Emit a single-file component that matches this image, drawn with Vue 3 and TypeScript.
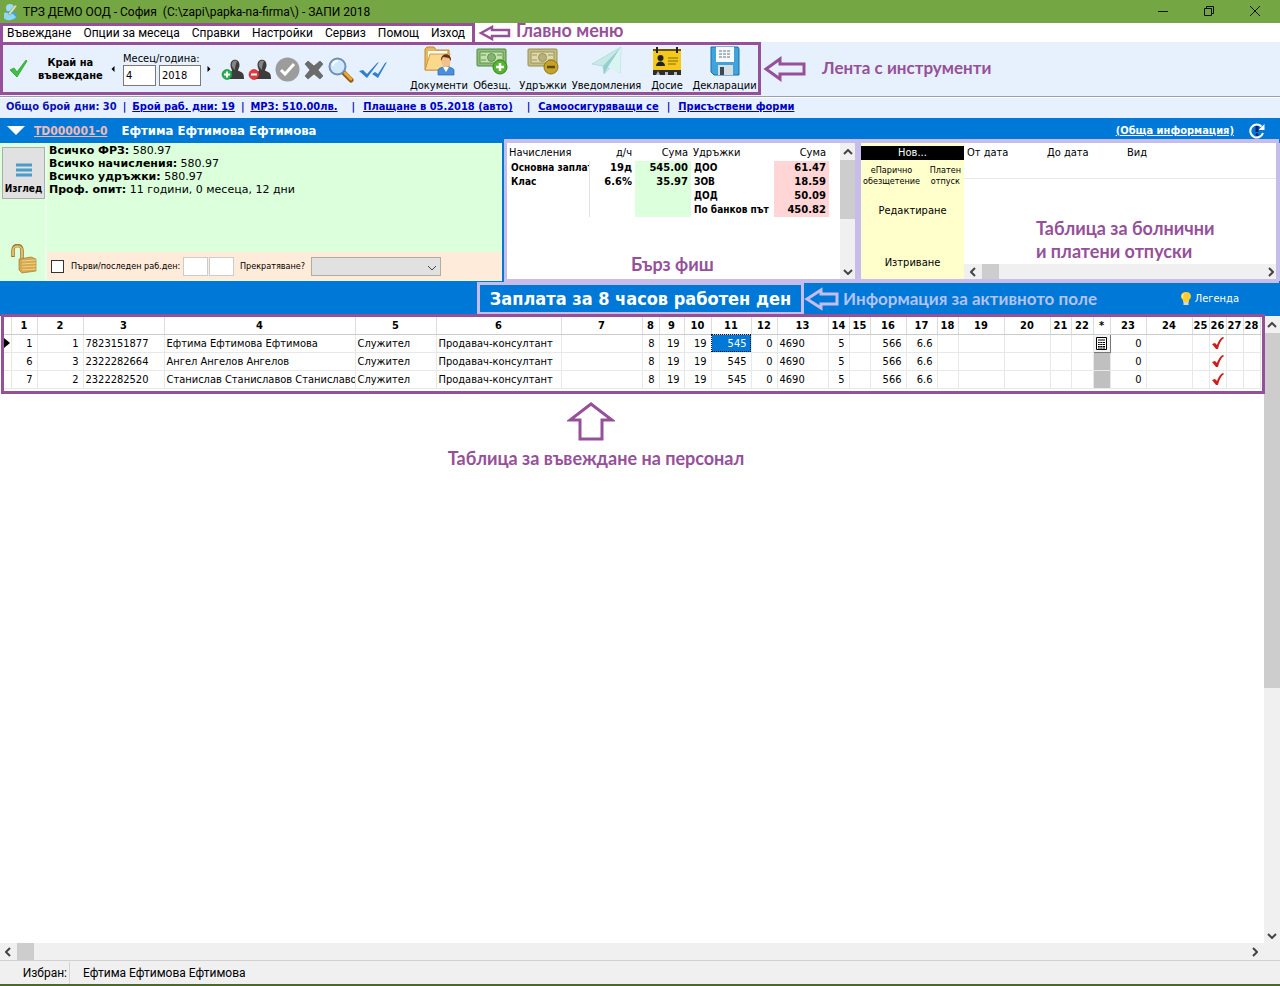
<script setup lang="ts">
import { ref } from 'vue'

interface Column {
  id: string
  width: number
  align: 'left' | 'right' | 'center'
}

const menu: string[] = ['Въвеждане', 'Опции за месеца', 'Справки', 'Настройки', 'Сервиз', 'Помощ', 'Изход']

const columns: Column[] = [
  { id: '1', width: 26, align: 'right' },
  { id: '2', width: 46, align: 'right' },
  { id: '3', width: 81, align: 'left' },
  { id: '4', width: 191, align: 'left' },
  { id: '5', width: 81, align: 'left' },
  { id: '6', width: 125, align: 'left' },
  { id: '7', width: 81, align: 'left' },
  { id: '8', width: 17, align: 'right' },
  { id: '9', width: 25, align: 'right' },
  { id: '10', width: 27, align: 'right' },
  { id: '11', width: 40, align: 'right' },
  { id: '12', width: 26, align: 'right' },
  { id: '13', width: 51, align: 'left' },
  { id: '14', width: 21, align: 'right' },
  { id: '15', width: 21, align: 'right' },
  { id: '16', width: 36, align: 'right' },
  { id: '17', width: 31, align: 'right' },
  { id: '18', width: 21, align: 'right' },
  { id: '19', width: 46, align: 'right' },
  { id: '20', width: 46, align: 'right' },
  { id: '21', width: 21, align: 'right' },
  { id: '22', width: 22, align: 'right' },
  { id: '*', width: 17, align: 'center' },
  { id: '23', width: 36, align: 'right' },
  { id: '24', width: 46, align: 'right' },
  { id: '25', width: 17, align: 'right' },
  { id: '26', width: 17, align: 'center' },
  { id: '27', width: 17, align: 'right' },
  { id: '28', width: 17, align: 'right' },
]

const shared: Record<string, string> = {
  '5': 'Служител', '6': 'Продавач-консултант', '8': '8', '9': '19', '10': '19', '11': '545',
  '12': '0', '13': '4690', '14': '5', '16': '566', '17': '6.6', '23': '0',
}

const people: Record<string, string>[] = [
  { ...shared, '1': '1', '2': '1', '3': '7823151877', '4': 'Ефтима Ефтимова Ефтимова' },
  { ...shared, '1': '6', '2': '3', '3': '2322282664', '4': 'Ангел Ангелов Ангелов' },
  { ...shared, '1': '7', '2': '2', '3': '2322282520', '4': 'Станислав Станиславов Станиславов' },
]

const slip: string[][] = [
  ['Основна заплата', '19д', '545.00', 'ДОО', '61.47'],
  ['Клас', '6.6%', '35.97', 'ЗОВ', '18.59'],
  ['', '', '', 'ДОД', '50.09'],
  ['', '', '', 'По банков път', '450.82'],
]

const month = ref('4')
const year = ref('2018')
const firstDay = ref('')
const lastDay = ref('')
const partial = ref(false)
</script>

<template>
  <div class="app">
    <header class="titlebar">
      <svg class="logo" width="16" height="18" viewBox="0 0 16 18">
        <circle cx="7" cy="5" r="4" fill="#9bdcf5" />
        <path d="M1 15c0-5 3-7 6-7s7 2 7 6c-2 4-11 4-13 1z" fill="#3fa6dc" />
        <path d="M1 10c3-2 5 2 9 1l3 3c-3 4-11 4-12 1z" fill="#8ed8f2" />
        <path d="M5 11 12 2l2 1-7 9z" fill="#e8e6b8" stroke="#8a9a6a" stroke-width=".6" />
      </svg>
      <span class="title">ТРЗ ДЕМО ООД - София&nbsp; (C:\zapi\papka-na-firma\) - ЗАПИ 2018</span>
      <div class="winctl">
        <button aria-label="Минимизиране"><svg width="12" height="12"><path d="M1 6.500H11" stroke="#111" /></svg></button>
        <button aria-label="Възстановяване"><svg width="12" height="12" fill="none" stroke="#111"><path d="M1.500 3.500h7v7h-7zM3.500 3.500v-2h7v7h-2" /></svg></button>
        <button aria-label="Затваряне"><svg width="12" height="12"><path d="M1 1l10 10M11 1 1 11" stroke="#111" /></svg></button>
      </div>
    </header>

    <div class="menurow">
      <nav class="menu">
        <button v-for="m in menu" :key="m">{{ m }}</button>
      </nav>
      <svg class="menu-arrow" width="34" height="16" viewBox="0 0 34 16" fill="none" stroke="#96509a" stroke-width="2.500">
        <path d="M3 8 14 2v3h17v6H14v3z" />
      </svg>
      <span class="note menu-note">Главно меню</span>
    </div>

    <div class="toolrow">
      <div class="toolbar">
        <button class="finish">
          <svg width="20" height="20" viewBox="0 0 20 20"><path d="M1 11l4-2 3 4L17 1l1 1L8 18z" fill="#3fc043" stroke="#27a52c" stroke-width=".8" /></svg>
          <span>Край на<br />въвеждане</span>
        </button>
        <button class="step" aria-label="Предишен месец"><svg width="4" height="6"><path d="M3.500 0v6L.5 3z" /></svg></button>
        <div class="period">
          <label for="month">Месец/година:</label>
          <div class="period-inputs">
            <input id="month" v-model="month" class="w-month" />
            <input v-model="year" class="w-year" aria-label="Година" />
          </div>
        </div>
        <button class="step" aria-label="Следващ месец"><svg width="4" height="6"><path d="M.5 0v6l3-3z" /></svg></button>
        <div class="tools">
          <button aria-label="Добавяне">
            <svg width="23" height="22" viewBox="0 0 23 22">
              <path d="M9.500 6c0-7 9-7 9 0 0 3-1.500 4-1.500 5.500l4 2c1.500 1 2 3 2 6.500H5c0-3 .5-5 2-6l4-2C11 10 9.500 9 9.500 6z" fill="#3c3c3c" />
              <path d="M11 4c1-3 4-3 5-2-1 3-2 5-2 9-2-2-4-4-3-7z" fill="#858585" />
              <circle cx="6" cy="15.500" r="5" fill="#25b04a" stroke="#138535" stroke-width=".6" />
              <path d="M6 12.500v6M3 15.500h6" stroke="#fff" stroke-width="2" />
            </svg>
          </button>
          <button aria-label="Премахване">
            <svg width="23" height="22" viewBox="0 0 23 22">
              <path d="M9.500 6c0-7 9-7 9 0 0 3-1.500 4-1.500 5.500l4 2c1.500 1 2 3 2 6.500H5c0-3 .5-5 2-6l4-2C11 10 9.500 9 9.500 6z" fill="#3c3c3c" />
              <path d="M11 4c1-3 4-3 5-2-1 3-2 5-2 9-2-2-4-4-3-7z" fill="#858585" />
              <circle cx="6" cy="15.500" r="5" fill="#e23b3b" stroke="#b31f24" stroke-width=".6" />
              <path d="M3 15.500h6" stroke="#fff" stroke-width="2" />
            </svg>
          </button>
          <button aria-label="Потвърждаване">
            <svg width="25" height="25" viewBox="0 0 25 25"><circle cx="12.500" cy="12.500" r="12" fill="#9c9c9c" /><path d="M6 13l4 4 9-10" fill="none" stroke="#fff" stroke-width="3" /></svg>
          </button>
          <button aria-label="Отказ">
            <svg width="20" height="20" viewBox="0 0 20 20"><path d="M1 4 4 1l6 5 6-5 3 3-5 6 5 6-3 3-6-5-6 5-3-3 5-6z" fill="#6c6c6c" stroke="#555" stroke-width=".6" /></svg>
          </button>
          <button aria-label="Търсене">
            <svg width="26" height="26" viewBox="0 0 26 26">
              <path d="m16 16 7 7" stroke="#8a5a16" stroke-width="5" stroke-linecap="round" /><path d="m17 16 6 6" stroke="#f0a632" stroke-width="3" stroke-linecap="round" />
              <circle cx="9.500" cy="9.500" r="8" fill="#cfe9fb" stroke="#6f8fb5" stroke-width="2" /><path d="M5 9c0-3 2-5 5-5" fill="none" stroke="#fff" stroke-width="2" />
            </svg>
          </button>
          <button aria-label="Проверка">
            <svg width="30" height="20" viewBox="0 0 30 20"><path d="M1 11l4-1 4 4L19 3l2-1L9 18zM14 14l3-2 3 2L27 3l2-1-9 16z" fill="#2e7fd0" /></svg>
          </button>
        </div>
        <div class="big">
          <button class="b-doc">
            <svg width="32" height="30" viewBox="0 0 32 30">
              <path d="M2 24V3l2-2h7l2 3h13v20z" fill="#e8b95a" stroke="#c28a2a" /><path d="M5 5h19v8H5z" fill="#fff" /><path d="M2 24 7 8h20l-5 16z" fill="#fbd98c" stroke="#d29a3d" />
              <path d="M15 29v-5c1-4 15-4 16 0v5z" fill="#4a8fdc" stroke="#2766ad" stroke-width=".7" /><path d="m20 21 3 5 3-5z" fill="#fff" /><ellipse cx="23" cy="15" rx="4.500" ry="6" fill="#f3c08c" /><path d="M18 15c-1-9 11-9 10 0l-2-3-6-1z" fill="#5f3515" />
            </svg><span>Документи</span>
          </button>
          <button class="b-pay">
            <svg width="32" height="30" viewBox="0 0 32 30">
              <rect x="1" y="3" width="29" height="17" rx="1" fill="#8fbf75" stroke="#4f8746" /><rect x="4" y="6" width="23" height="11" fill="#c6e0ae" stroke="#5f9652" /><circle cx="15.500" cy="11.500" r="4" fill="#86b373" stroke="#5f9652" /><path d="M5 9h5M5 14h5M21 9h5M21 14h5" stroke="#5f9652" />
              <circle cx="24" cy="21" r="7" fill="#54b52e" stroke="#37861a" /><path d="M24 17v8M20 21h8" stroke="#fff" stroke-width="2.500" />
            </svg><span>Обезщ.</span>
          </button>
          <button class="b-ded">
            <svg width="32" height="30" viewBox="0 0 32 30">
              <rect x="1" y="3" width="29" height="17" rx="1" fill="#c5bd83" stroke="#96904f" /><rect x="4" y="6" width="23" height="11" fill="#dfdaae" stroke="#9c965b" /><circle cx="15.500" cy="11.500" r="4" fill="#b7b079" stroke="#9c965b" /><path d="M5 9h5M5 14h5M21 9h5M21 14h5" stroke="#9c965b" />
              <circle cx="24" cy="21" r="7" fill="#c5a328" stroke="#947512" /><path d="M20 21h8" stroke="#5f4a08" stroke-width="2.500" />
            </svg><span>Удръжки</span>
          </button>
          <button class="b-not">
            <svg width="32" height="30" viewBox="0 0 32 30">
              <path d="M1 18 30 1l-1 26-9-6-7 7-1-8z" fill="#c6ebe7" stroke="#a5d4d6" stroke-width=".7" /><path d="M30 1 12 20l1 8 4-7z" fill="#97cfd0" /><path d="M30 1 17 21l12 6z" fill="#d9f5f1" />
            </svg><span>Уведомления</span>
          </button>
          <button class="b-file">
            <svg width="30" height="30" viewBox="0 0 30 30">
              <path d="M1 3h28v21H1z" fill="#f4c81c" /><path d="M1 4h28" stroke="#3a3000" stroke-width="1.500" /><path d="M5 1v6M25 1v6" stroke="#222" stroke-width="2" /><path d="M1 24h28v5H1z" fill="#2d2d2d" /><path d="M4 29l2-4 2 4M13 29v-3h3v3M22 29v-3h3v3" fill="#bbb" />
              <circle cx="8.500" cy="12" r="3" fill="#222" /><path d="M4 20c0-6 9-6 9 0z" fill="#222" /><path d="M16 12h10M16 15h10M16 18h8" stroke="#8a6a00" />
            </svg><span>Досие</span>
          </button>
          <button class="b-dec">
            <svg width="30" height="30" viewBox="0 0 30 30">
              <path d="M2 1h26l1 2v26H4l-3-3V1z" fill="#3fa3dc" stroke="#1c6fa8" /><path d="M6 1h18v15H6z" fill="#f7fafc" /><path d="M9 5h12M9 8h12M9 11h12" stroke="#65727c" stroke-dasharray="3 1" /><path d="M8 19h15v10H8z" fill="#d8dde0" /><path d="M10 21h4v8h-4z" fill="#3b4a57" />
            </svg><span>Декларации</span>
          </button>
        </div>
      </div>
      <svg class="tool-arrow" width="46" height="26" viewBox="0 0 46 26" fill="none" stroke="#96509a" stroke-width="3">
        <path d="M4 13 18 3v5h24v10H18v5z" />
      </svg>
      <span class="note small tool-note">Лента с инструменти</span>
    </div>

    <div class="info">
      <span>Общо брой дни: 30</span><span>|</span>
      <a href="#">Брой раб. дни: 19</a><span>|</span>
      <a href="#" class="i3">МРЗ: 510.00лв.</a><span>|</span>
      <a href="#" class="i4">Плащане в 05.2018 (авто)</a><span>|</span>
      <a href="#" class="i5">Самоосигуряващи се</a><span>|</span>
      <a href="#" class="i6">Присъствени форми</a>
    </div>

    <div class="person">
      <svg width="18" height="9"><path d="M0 0h18L9 9z" fill="#fff" /></svg>
      <a href="#" class="code">TD000001-0</a>
      <span class="name">Ефтима Ефтимова Ефтимова</span>
      <a href="#" class="general">(Обща информация)</a>
      <svg width="16" height="16" viewBox="0 0 16 16">
        <path d="M12.500 3.500A6.500 6.500 0 1 0 14 10" fill="none" stroke="#fff" stroke-width="2" /><path d="M15.500 1v6h-6z" fill="#fff" /><path d="M8 3v6" stroke="#10206f" stroke-width="3" /><circle cx="8" cy="11.500" r="1.500" fill="#10206f" />
      </svg>
    </div>

    <section class="panels">
      <div class="summary">
        <div class="viewcol">
          <button class="viewbtn">
            <svg width="16" height="14"><path d="M0 2h16M0 7h16M0 12h16" stroke="#4a9cc9" stroke-width="3" /></svg>
            <span>Изглед</span>
          </button>
          <svg width="28" height="30" viewBox="0 0 28 30">
            <path d="M3 13V6c0-6 9-6 9 0v9" fill="none" stroke="#9b742d" stroke-width="3.500" /><path d="M3 12V6c0-5 9-5 9 0v9" fill="none" stroke="#dfbc68" stroke-width="2" />
            <path d="M9 15l12-2 5 2v12l-14 2-3-3z" fill="#d6a94f" stroke="#a47c34" stroke-width=".7" /><path d="M12 17l14-1M12 20l14-1M12 23l14-1M12 26l14-1" stroke="#f0d287" />
          </svg>
        </div>
        <div class="summary-main">
          <div class="totals">
            <div><b>Всичко ФРЗ:</b> 580.97</div>
            <div><b>Всичко начисления:</b> 580.97</div>
            <div><b>Всичко удръжки:</b> 580.97</div>
            <div><b>Проф. опит:</b> 11 години, 0 месеца, 12 дни</div>
          </div>
          <div class="dates">
            <input id="partial" v-model="partial" type="checkbox" />
            <label for="partial" class="l1">Първи/последен раб.ден:</label>
            <input v-model="firstDay" class="day" aria-label="Първи работен ден" />
            <input v-model="lastDay" class="day" aria-label="Последен работен ден" />
            <label for="term" class="l2">Прекратяване?</label>
            <div class="selwrap">
              <select id="term"><option></option></select>
              <svg width="10" height="6"><path d="M1 1l4 4 4-4" fill="none" stroke="#444" /></svg>
            </div>
          </div>
        </div>
      </div>

      <div class="slip">
        <table>
          <colgroup><col class="c82" /><col class="c46" /><col class="c56" /><col class="c83" /><col class="c55" /></colgroup>
          <thead><tr><th>Начисления</th><th class="r">д/ч</th><th class="r">Сума</th><th>Удръжки</th><th class="r">Сума</th></tr></thead>
          <tbody>
            <tr v-for="(r, i) in slip" :key="i">
              <td class="first">{{ r[0] }}</td><td class="r">{{ r[1] }}</td><td class="r green">{{ r[2] }}</td><td>{{ r[3] }}</td><td class="r red">{{ r[4] }}</td>
            </tr>
          </tbody>
        </table>
        <div class="vscroll">
          <svg width="10" height="6"><path d="M1 5l4-4 4 4" /></svg>
          <div class="thumb"></div>
          <svg class="end" width="10" height="6"><path d="M1 1l4 4 4-4" /></svg>
        </div>
        <span class="note slip-note">Бърз фиш</span>
      </div>

      <div class="leave">
        <div class="leave-side">
          <button class="new">Нов...</button>
          <div class="pair">
            <button>еПарично<br />обезщетение</button>
            <button>Платен<br />отпуск</button>
          </div>
          <button class="edit">Редактиране</button>
          <button class="del">Изтриване</button>
        </div>
        <div class="leave-main">
          <table>
            <thead><tr><th class="d1">От дата</th><th class="d2">До дата</th><th>Вид</th></tr></thead>
          </table>
          <div class="hscroll">
            <svg width="6" height="10"><path d="M5 1 1 5l4 4" /></svg>
            <div class="thumb"></div>
            <svg class="end" width="6" height="10"><path d="M1 1l4 4-4 4" /></svg>
          </div>
          <span class="note leave-note">Таблица за болнични<br />и платени отпуски</span>
        </div>
      </div>
    </section>

    <div class="active">
      <h1>Заплата за 8 часов работен ден</h1>
      <svg width="36" height="24" viewBox="0 0 36 24" fill="none" stroke="#c6bdec" stroke-width="3">
        <path d="M3 12 17 3v4h16v10H17v4z" />
      </svg>
      <span class="note small light">Информация за активното поле</span>
      <button class="legend">
        <svg width="12" height="16" viewBox="0 0 12 16"><path d="M6 1c6 0 6 6 3 8v2H3V9C0 7 0 1 6 1z" fill="#ffcf31" /><path d="M4 3c-2 1-2 3-1 4" fill="none" stroke="#fff3a8" /><path d="M3.500 11h5v3h-5z" fill="#d8d8d8" /></svg>
        <span>Легенда</span>
      </button>
    </div>

    <main class="work">
      <div class="sheet">
        <div class="frame">
          <table class="grid">
            <colgroup><col class="mark" /><col v-for="c in columns" :key="c.id" :style="{ width: c.width + 'px' }" /></colgroup>
            <thead><tr><th></th><th v-for="c in columns" :key="c.id">{{ c.id }}</th></tr></thead>
            <tbody>
              <tr v-for="(p, i) in people" :key="i">
                <td class="marker"><svg v-if="i === 0" width="6" height="10"><path d="M0 0v10l6-5z" /></svg></td>
                <td
                  v-for="c in columns" :key="c.id"
                  :class="[c.align, { sel: i === 0 && c.id === '11', calc: c.id === '*', raised: i === 0 && c.id === '*' }]"
                >
                  <svg v-if="c.id === '*' && i === 0" width="11" height="13" viewBox="0 0 11 13"><path d="M.5.5h10v12H.5z" fill="#fff" stroke="#000" /><path d="M2 3h7M2 5.500h7M2 7.500h7M2 9.500h7M2 11h7" stroke="#000" /><path d="M4 5v7M6.500 5v7" stroke="#fff" stroke-width=".5" /></svg>
                  <svg v-else-if="c.id === '26'" width="12" height="12" viewBox="0 0 12 12"><path d="M0 7l3-1 2 2C6 5 8 1 11 0l1 1C9 3 7 7 6 12H4z" fill="#d01c1c" /></svg>
                  <template v-else>{{ p[c.id] }}</template>
                </td>
              </tr>
            </tbody>
          </table>
        </div>
        <div class="sheet-note">
          <svg width="48" height="40" viewBox="0 0 48 40" fill="none" stroke="#96509a" stroke-width="3"><path d="M24 3 45 19H35v19H13V19H3z" /></svg>
          <span class="note">Таблица за въвеждане на персонал</span>
        </div>
      </div>
      <div class="vscroll main-v">
        <svg width="10" height="6"><path d="M1 5l4-4 4 4" /></svg>
        <div class="thumb"></div>
        <svg class="end" width="10" height="6"><path d="M1 1l4 4 4-4" /></svg>
      </div>
    </main>
    <div class="hscroll main-h">
      <svg width="6" height="10"><path d="M5 1 1 5l4 4" /></svg>
      <div class="thumb"></div>
      <svg class="end" width="6" height="10"><path d="M1 1l4 4-4 4" /></svg>
    </div>

    <footer class="status">
      <span class="s1">Избран:</span><span class="s2">Ефтима Ефтимова Ефтимова</span>
    </footer>
  </div>
</template>

<style>
body { margin: 0; background: #fff; }
</style>

<style scoped>
.app { display: flex; flex-direction: column; min-height: 100vh; overflow: hidden; font: 11px/14px "DejaVu Sans Condensed", "Noto Sans", sans-serif; color: #000; background: #fff; }
.app * { box-sizing: border-box; }
svg { display: block; flex: none; }
button { font: inherit; color: inherit; background: none; border: 0; padding: 0; margin: 0; white-space: nowrap; }
input, select { font: inherit; margin: 0; border-radius: 0; }
table { border-collapse: collapse; table-layout: fixed; }
.note { font: 700 18px/23px Lato, "Open Sans", sans-serif; color: #96509a; white-space: nowrap; }
.small { font-size: 17px; }

.titlebar { display: flex; align-items: center; height: 23px; padding-left: 3px; background: #75a644; font: 12px/16px Roboto, "Noto Sans", sans-serif; }
.title { margin-left: 4px; white-space: pre; }
.winctl { display: flex; gap: 34px; margin-left: auto; padding-right: 19px; }
.winctl svg { margin-bottom: 2px; }

.menurow { display: flex; align-items: center; height: 19px; }
.menu { display: flex; align-items: center; gap: 12px; height: 19px; width: 475px; padding: 0 4px 2px; border: 3px solid #96509a; border-bottom: 0; font: 12px/14px Roboto, "Noto Sans", sans-serif; flex: none; }
.menu-arrow { margin: 0 4px 0 3px; }
.menu-note { padding-bottom: 4px; }

.toolrow { display: flex; align-items: center; height: 55px; background: #e7f1fd; border-bottom: 1px solid #9aa0a8; }
.toolbar { display: flex; align-items: center; width: 761px; height: 53px; align-self: flex-start; border: 3px solid #96509a; flex: none; }
.finish { display: flex; align-items: center; gap: 9px; width: 108px; padding-left: 6px; font-weight: 700; line-height: 13px; }
.period { width: 78px; margin-left: 6px; padding-top: 2px; }
.period label { display: block; line-height: 12px; white-space: nowrap; }
.period-inputs { display: flex; gap: 3px; }
.period input { height: 21px; border: 1px solid #7a7a7a; padding: 0 2px; background: #fff; }
.w-month { width: 33px; }
.w-year { width: 42px; }
.step { width: 6px; }
.period + .step { margin-left: 6px; }
.tools { display: flex; align-items: center; gap: 4px; margin-left: 8px; padding-top: 2px; }
.big { display: flex; margin-left: auto; }
.big button { display: flex; flex-direction: column; align-items: center; gap: 3px; padding-top: 2px; }
.b-doc { width: 58px; }
.b-pay { width: 48px; }
.b-ded { width: 54px; }
.b-not { width: 73px; }
.b-file { width: 48px; }
.b-dec { width: 67px; }
.tool-arrow { margin: 0 14px 0 1px; }
.tool-note { padding-bottom: 4px; }

.info { display: flex; align-items: center; height: 21px; padding: 0 0 2px 6px; gap: 6px; background: #e7f1fd; border-top: 1px solid #fff; font-weight: 700; color: #0a10b4; }
.info a { color: #0000c8; }
.info span, .info a { white-space: nowrap; }
.info .i3 { margin-right: 8px; }
.info .i4 { margin: 0 8px 0 2px; }
.info .i5 { margin: 0 2px; }
.info .i6 { margin-left: 2px; }

.person { display: flex; align-items: center; height: 25px; padding: 0 15px 0 7px; background: #0078d7; color: #fff; font-weight: 700; }
.code { margin-left: 9px; font-size: 12px; color: #f5b8b0; }
.name { margin-left: 14px; font-size: 13px; }
.general { margin-left: auto; margin-right: 15px; color: #fff; }

.panels { display: flex; height: 138px; background: #c6bdec; }
.summary { display: flex; width: 504px; flex: none; background: #dcffdc; border-right: 2px solid #0078d7; }
.viewcol { display: flex; flex-direction: column; align-items: center; justify-content: space-between; width: 47px; padding: 4px 0 7px 2px; border-right: 2px solid #e9ffe9; flex: none; }
.viewbtn { display: flex; flex-direction: column; align-items: center; justify-content: flex-end; gap: 5px; width: 43px; height: 52px; padding-bottom: 2px; background: #e1e1e1; border: 1px solid #adadad; font-weight: 700; font-size: 10px; }
.summary-main { display: flex; flex-direction: column; flex: 1; }
.totals { flex: 1; padding: 1px 2px; font: 11px/13px "DejaVu Sans", sans-serif; }
.dates { display: flex; align-items: center; height: 29px; background: #ffebd9; padding-left: 4px; font: 9px/12px "DejaVu Sans Condensed", sans-serif; border-bottom: 1px solid #e9f5ff; }
.dates input[type="checkbox"] { appearance: none; width: 13px; height: 13px; border: 1px solid #333; background: #fff; }
.l1 { width: 112px; margin-left: 7px; white-space: nowrap; }
.l2 { width: 71px; margin-left: 5px; white-space: nowrap; }
.day { width: 25px; height: 19px; border: 1px solid #ccc; background: #fff; margin-right: 1px; padding: 1px; }
.selwrap { position: relative; width: 130px; height: 19px; }
.selwrap select { appearance: none; width: 100%; height: 100%; background: #e1e1e1; border: 1px solid #adada0; }
.selwrap svg { position: absolute; right: 4px; top: 8px; pointer-events: none; }

.slip, .leave { position: relative; display: flex; margin-top: -4px; margin-bottom: -2px; border: 3px solid #c6bdec; background: #fff; z-index: 1; }
.slip { width: 354px; flex: none; border-width: 4px 3px 4px; }
.slip table { width: 322px; align-self: flex-start; }
.slip th { height: 18px; padding: 1px 2px 0; font-weight: 400; text-align: left; }
.slip td { height: 14px; padding: 0 0 0 3px; font: 700 10px/14px "DejaVu Sans Condensed", sans-serif; white-space: nowrap; overflow: hidden; }
.slip .r { text-align: right; padding-left: 0; padding-right: 3px; }
.slip td.r { font-family: "DejaVu Sans", sans-serif; }
.slip .first { border-right: 1px solid #e4e4e4; padding: 0 0 0 4px; }
.slip .green { background: #dcffdc; }
.slip .red { background: #ffd5d5; }
.c82 { width: 82px; } .c46 { width: 46px; } .c56 { width: 56px; } .c83 { width: 83px; } .c55 { width: 55px; }
.slip-note { position: absolute; left: 124px; bottom: 3px; }

.vscroll { display: flex; flex-direction: column; align-items: center; width: 15px; padding: 6px 0 4px; margin-left: auto; background: #f0f0f0; flex: none; }
.vscroll .thumb { width: 100%; height: 59px; margin-top: 5px; background: #cdcdcd; }
.vscroll svg, .hscroll svg { fill: none; stroke: #444; stroke-width: 2px; }
.vscroll .end { margin-top: auto; }
.hscroll { display: flex; align-items: center; height: 15px; padding: 0 2px 0 6px; background: #f0f0f0; }
.hscroll .thumb { width: 17px; height: 100%; margin-left: 6px; background: #cdcdcd; }
.hscroll .end { margin-left: auto; }

.leave { flex: 1; border-width: 4px 3px 4px; margin-right: 1px; }
.leave-side { display: flex; flex-direction: column; width: 103px; padding: 3px 0 9px; background: #ffffcc; flex: none; }
.new { height: 14px; background: #000; color: #fff; line-height: 14px; }
.pair { display: flex; justify-content: space-between; padding: 5px 3px 0 2px; font-size: 9px; line-height: 11px; }
.edit { margin-top: 17px; }
.del { margin-top: auto; }
.leave-main { position: relative; display: flex; flex-direction: column; justify-content: space-between; flex: 1; }
.leave-main table { width: 100%; border-bottom: 1px solid #e8e8e8; }
.leave-main th { height: 35px; padding: 3px 3px; font-weight: 400; text-align: left; vertical-align: top; }
.d1, .d2 { width: 80px; }
.leave-note { position: absolute; left: 72px; top: 74px; }

.active { display: flex; align-items: center; height: 35px; padding-left: 477px; background: #0078d7; color: #fff; }
.active h1 { height: 33px; min-width: 327px; margin: 0; padding: 0 1px; border: 3px solid #c6bdec; font: 700 18px/28px "DejaVu Sans Condensed", "Noto Sans", sans-serif; text-align: center; white-space: nowrap; }
.light { color: #b4c2f5; margin-left: 3px; }
.legend { display: flex; align-items: center; gap: 3px; margin: 0 41px 0 auto; }

.work { display: flex; flex: 1; }
.sheet { flex: 1; min-width: 0; margin: -2px 0 0 1px; }
.frame { height: 80px; border: 3px solid #96509a; background: #fff; margin-right: -1px; position: relative; overflow: hidden; }
.grid { width: 1256px; }
.mark { width: 7px; }
.grid th { height: 17px; padding: 1px 0 0; font-weight: 700; border-right: 1px solid #ddd; border-bottom: 1px solid #ccc; }
.grid td { height: 18px; padding: 1px 4px 0 2px; line-height: 16px; white-space: nowrap; overflow: hidden; border-right: 1px solid #e8e8e8; border-bottom: 1px solid #e8e8e8; }
.grid .left { padding: 1px 0 0 2px; }
.grid .right { text-align: right; }
.grid .center { padding: 0; }
.grid .center svg { margin: 0 auto; }
.grid .marker { padding: 0; }
.grid .sel { background: #0078d7; color: #fff; outline: 1px dotted #111; outline-offset: -1px; }
.grid .calc { background: #c0c0c0; }
.grid .raised { background: #f4f4f4; border-right-color: #777; border-bottom-color: #777; }
.sheet-note { display: flex; flex-direction: column; align-items: center; width: 290px; margin: 7px 0 0 450px; gap: 6px; }
.sheet-note svg { margin-right: 10px; }
.main-v { width: 16px; }
.main-v .thumb { height: 355px; }
.main-h { height: 17px; padding: 0 22px 0 5px; }

.status { display: flex; align-items: center; height: 26px; border-top: 1px solid #d0d0d0; border-bottom: 2px solid #4a6a2c; background: #f0f0f0; font: 12px/22px Roboto, "Noto Sans", sans-serif; }
.s1 { width: 70px; padding-right: 2px; text-align: right; border-right: 1px solid #d4d4d4; }
.s2 { padding-left: 13px; }
</style>
